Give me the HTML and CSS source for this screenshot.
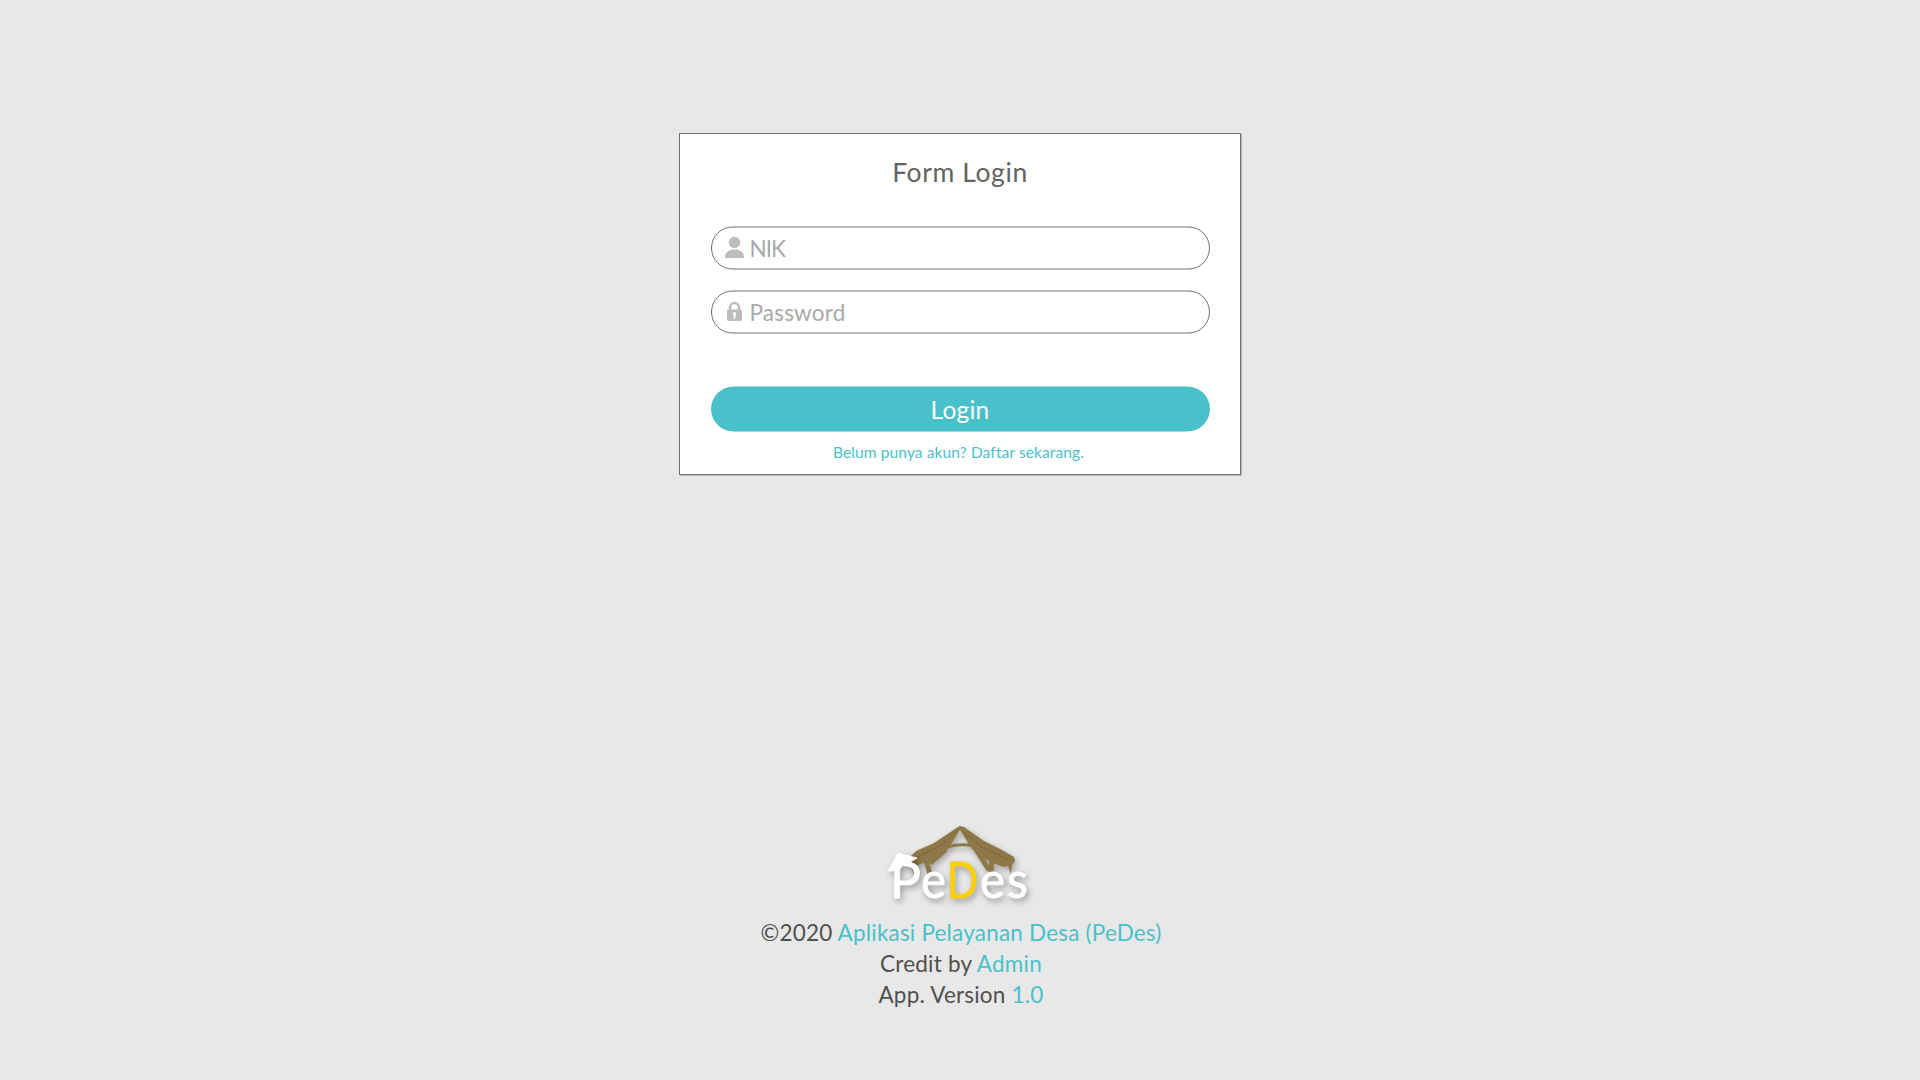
FILE: index.html
```html
<!DOCTYPE html>
<html lang="id">
<head>
<meta charset="utf-8">
<title>Form Login</title>
<link rel="stylesheet" href="styles.css">
</head>
<body>
<main class="card">
  <h1 class="title">Form Login</h1>
  <form class="form">
    <label class="field">
      <svg class="outline" viewBox="0 0 499 44"><rect x=".5" y="1" width="498" height="42" rx="21"/></svg>
      <svg class="icon" viewBox="0 0 20 22"><circle cx="10.500" cy="5.500" r="5.700"/><path d="M1 21v-1C1 15.500 5 12.500 10.500 12.500s9.500 3 9.500 7.500v1z"/></svg>
      <span class="hint nik">NIK</span>
    </label>
    <label class="field">
      <svg class="outline" viewBox="0 0 499 44"><rect x=".5" y="1" width="498" height="42" rx="21"/></svg>
      <svg class="icon" viewBox="0 0 20 22"><path class="shackle" d="M6 9.500V6.500a4.500 4.500 0 0 1 9 0v3"/><path fill-rule="evenodd" d="M4.500 8.500h12q1.500 0 1.500 1.500v8.500q0 1.500-1.500 1.500h-12q-1.500 0-1.500-1.500V10q0-1.500 1.500-1.500zM10.500 11a1.700 1.700 0 0 0-1 3.100V17.500h2v-3.400a1.700 1.700 0 0 0-1-3.100z"/></svg>
      <span class="hint password">Password</span>
    </label>
    <button class="submit" type="button">
      <svg class="pill" viewBox="0 0 499 46"><rect y=".5" width="499" height="45" rx="22.5"/></svg>
      <span class="label">Login</span>
    </button>
  </form>
  <a class="register">Belum punya akun? Daftar sekarang.</a>
</main>
<footer class="footer">
  <svg class="logo" viewBox="0 0 180 110">
    <g class="roof">
      <path d="M88 17l2-1 4 1 20 14 18 9 12 7 1 4-3 4-1 9-3-8-5 1-18-8-13-10L90 20 78 39 63 49 48 55l-3 2-1 8-3-9 1-6-1-4 5-5 18-8z"/>
      <path class="beam thin" d="M77 37q14-4 27-1"/>
      <path class="beam" d="M76 39L60 53M56 50l4 14M105 38l14 22M122 49l-1 14"/>
      <path class="grain" d="M87 21L70 36 46 48M93 21l18 16 29 13"/>
    </g>
    <g class="word">
      <path d="M28 43l19 5-5 3-9 3-4 7H18z"/>
      <text class="cap" x="20" y="87.500" textLength="31" lengthAdjust="spacingAndGlyphs">P</text>
      <text x="51" y="87.500" textLength="25" lengthAdjust="spacingAndGlyphs">e</text>
      <text class="cap gold" x="77" y="87.500" textLength="31" lengthAdjust="spacingAndGlyphs">D</text>
      <text x="110" y="87.500" textLength="25" lengthAdjust="spacingAndGlyphs">e</text>
      <text x="137" y="87.500" textLength="21" lengthAdjust="spacingAndGlyphs">s</text>
    </g>
  </svg>
  <p class="line">©2020 <a>Aplikasi Pelayanan Desa (PeDes)</a></p>
  <p class="line">Credit by <a>Admin</a></p>
  <p class="line">App. Version <a>1.0</a></p>
</footer>
</body>
</html>
```
FILE: styles.css
```css
* { box-sizing: border-box; }
body {
  margin: 0;
  height: 1080px;
  padding-top: 133px;
  display: flex;
  flex-direction: column;
  align-items: center;
  background: #e8e8e8;
  color: #505050;
  font-family: Lato, "Liberation Sans", sans-serif;
}
.card {
  width: 562px;
  height: 342px;
  display: flex;
  flex-direction: column;
  align-items: center;
  background: #fff;
  border: 1px solid #707070;
  box-shadow: 1px 1px 0 #b9b9b9;
}
.title { margin: 22px 0 0; font-size: 26.5px; line-height: 32px; font-weight: 400; letter-spacing: .6px; color: #636363; }
.form { width: 499px; margin-top: 38px; display: flex; flex-direction: column; gap: 20px; }
.field { position: relative; height: 44px; padding-left: 13px; display: flex; align-items: center; gap: 6px; }
.outline, .pill { position: absolute; inset: 0; width: 100%; height: 100%; }
.outline { fill: none; stroke: #707070; }
.icon { width: 20px; height: 22px; fill: #bdbdbd; }
.shackle { fill: none; stroke: #bdbdbd; stroke-width: 2.4; }
.hint { padding-top: 1px; font-size: 22.5px; line-height: 29px; color: #a9a9a9; }
.nik { letter-spacing: -1px; }
.password { letter-spacing: .2px; }
.submit {
  position: relative; height: 46px; margin-top: 32px; padding: 1px 0 0; border: 0; background: none;
  font: 24.5px/30px Lato, "Liberation Sans", sans-serif; letter-spacing: .2px; color: #fff;
}
.pill { fill: #49c1cb; }
.label { position: relative; }
.register { margin: 10px 3px 0 0; font-size: 15.5px; line-height: 20px; letter-spacing: .12px; color: #49c1cb; }
.footer { margin-top: 335px; display: flex; flex-direction: column; align-items: center; }
.logo { width: 180px; height: 110px; margin-bottom: -3px; }
.roof { fill: #8f7848; filter: drop-shadow(2px 3px 3px rgba(0,0,0,.3)); }
.beam { fill: none; stroke: #8f7848; stroke-width: 5; }
.thin { stroke-width: 3; }
.grain { fill: none; stroke: #7d673b; stroke-width: 1; }
.word { fill: #fff; stroke: #fff; stroke-width: .8; font: 50px Lato, sans-serif; filter: drop-shadow(2px 3px 3px rgba(0,0,0,.35)); }
.cap { font-size: 51px; }
.gold { fill: #fdd000; stroke: #fdd000; }
.line { margin: 0 0 0 2px; font-size: 22.5px; line-height: 31px; letter-spacing: .2px; white-space: nowrap; }
.line a { color: #49c1cb; }
```
